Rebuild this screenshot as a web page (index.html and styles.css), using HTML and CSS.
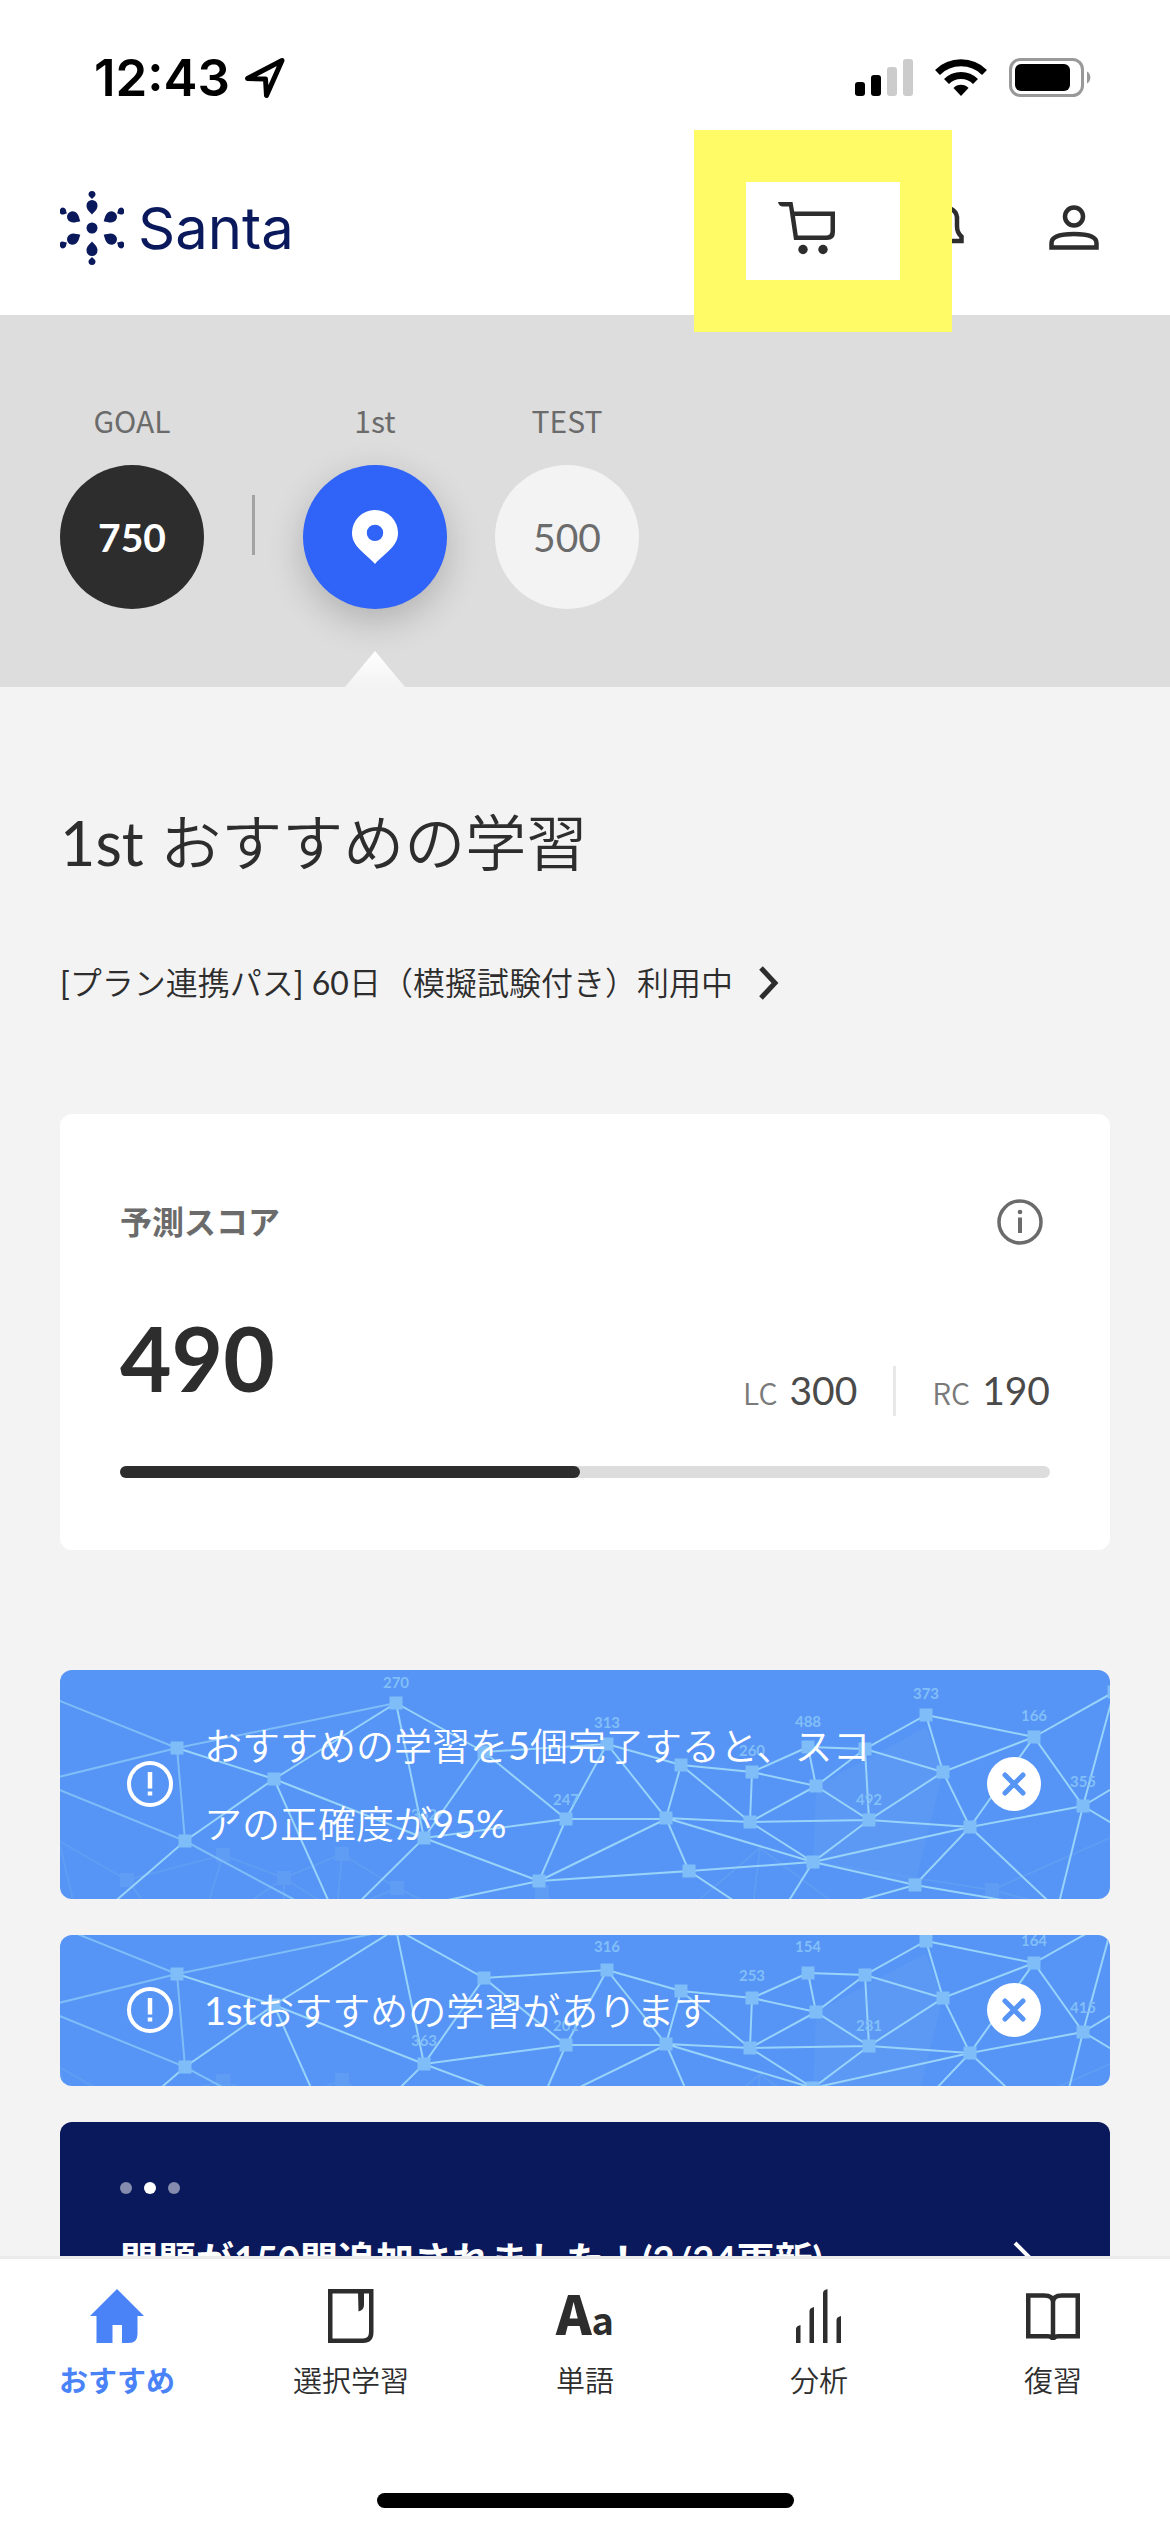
FILE: index.html
```html
<!DOCTYPE html>
<html lang="ja">
<head>
<meta charset="utf-8">
<meta name="viewport" content="width=device-width, initial-scale=1">
<title>Santa</title>
<link rel="stylesheet" href="styles.css">
</head>
<body>
<svg class="defs" aria-hidden="true">
  <defs>
    <path id="petal" d="M0-13.500C-3-17-5.500-18.500-5.500-22.500A5.500 5.500 0 0 1 5.500-22.500C5.500-18.500 3-17 0-13.500Z"/>
    <path id="seed" d="M0-29C-1.500-31-3.500-31.500-3.500-33.500A3.300 3.300 0 0 1 3.500-33.500C3.500-31.500 1.500-31 0-29Z"/>
    <g id="mesh">
      <path class="mesh-face" d="M756 116L866 57L883 102L855 215L753 192Z"/>
      <g class="mesh-faint">
        <path d="M-20 160L67 210L163 185L224 208L282 184L337 218L360 229M67 210L90 240M163 185L140 260M224 208V260M282 184L275 260M224 208L150 260M224 208L290 250M337 218L260 250M0 175L20 260M700 178L640 229M700 178L690 260M700 178L790 245M753 192L932 220L1050 168M932 220L1050 250"/>
        <path d="M61 204h12v12h-12zM157 179h12v12h-12zM218 202h12v12h-12zM276 178h12v12h-12zM331 212h12v12h-12zM476 216h12v12h-12zM926 214h12v12h-12z"/>
      </g>
      <path class="mesh-soft" d="M-30 19L117 78L-30 114M336 33L117 78M-30 108L125 171L117 78M125 171L233 229L280 254"/>
      <path class="mesh-line" d="M117 78L214 109L336 33M214 109L125 171L30 253M214 109L364 168M214 109L277 250M336 33L364 168L277 254M336 33L424 82L547 74L506 149L479 211L364 168L506 149L424 82L364 168M547 74L621 95L606 148L547 74M506 149H606L479 211L629 201L606 148M479 211L340 240M621 95L692 102L690 152L621 95M690 152L606 148L753 192L629 201L700 248M692 102L748 77L756 116L692 102M756 116L690 152L809 150L756 116L805 79L748 77M805 79L809 150L883 102L805 79L866 45L883 102L974 67L866 45M690 152L753 192L809 150L910 157L753 192L855 215L910 157L883 102M753 192L720 245M910 157L974 67L1023 136L910 157L1003 245M974 67L1054 22L1070 12M1023 136L1054 22M1023 136L1060 114M1023 136L1060 158M1023 136L996 245M855 215L780 236M855 215L960 233"/>
      <path class="mesh-node" d="M110.500 71.500h13v13h-13zM207.500 102.500h13v13h-13zM118.500 164.500h13v13h-13zM329.500 26.500h13v13h-13zM417.500 75.500h13v13h-13zM540.500 67.500h13v13h-13zM357.500 161.500h13v13h-13zM499.500 142.500h13v13h-13zM472.500 204.500h13v13h-13zM614.500 88.500h13v13h-13zM599.500 141.500h13v13h-13zM685.500 95.500h13v13h-13zM683.500 145.500h13v13h-13zM622.500 194.500h13v13h-13zM741.500 70.500h13v13h-13zM798.500 72.500h13v13h-13zM749.500 109.500h13v13h-13zM802.500 143.500h13v13h-13zM746.500 185.500h13v13h-13zM859.500 38.500h13v13h-13zM967.500 60.500h13v13h-13zM876.500 95.500h13v13h-13zM903.500 150.500h13v13h-13zM848.500 208.500h13v13h-13zM1016.500 129.500h13v13h-13zM1047.500 15.500h13v13h-13z"/>
    </g>
    <g id="alert">
      <circle cx="24" cy="24" r="21" fill="none" stroke="#fff" stroke-width="4"/>
      <path d="M24 12v16.500M24 31.500v4" fill="none" stroke="#fff" stroke-width="4.500"/>
    </g>
    <g id="close">
      <circle cx="27" cy="27" r="27" fill="#fff"/>
      <path d="M18 18l18 18M36 18L18 36" fill="none" stroke="#5694f5" stroke-width="5" stroke-linecap="round"/>
    </g>
  </defs>
</svg>

<div class="app">
  <div class="status">
    <div class="status-group">
      <span class="clock">12:43</span>
      <svg width="42" height="42" viewBox="0 0 42 42" aria-hidden="true"><path d="M3.500 21.500L38 3.500L22.500 38.500L21.500 22Z" fill="none" stroke="#000" stroke-width="5" stroke-linejoin="round"/></svg>
    </div>
    <div class="status-group status-right">
      <svg width="58" height="38" viewBox="0 0 58 38" aria-hidden="true"><rect y="23" width="10" height="14" rx="3"/><rect x="16" y="16" width="10" height="21" rx="3"/><rect x="32" y="8" width="10" height="29" rx="3" fill="#ccc"/><rect x="48" width="10" height="37" rx="3" fill="#ccc"/></svg>
      <svg width="52" height="38" viewBox="0 0 52 38" aria-hidden="true"><path d="M26 37L18.500 29A10.500 10.500 0 0 1 33.500 29Z"/><path d="M11.500 22.500A20.500 20.500 0 0 1 40.500 22.500M2.500 13.500A33.500 33.500 0 0 1 49.500 13.500" fill="none" stroke="#000" stroke-width="7"/></svg>
      <svg width="83" height="40" viewBox="0 0 83 40" aria-hidden="true"><rect x="1.500" y="1.500" width="72" height="36" rx="10" fill="none" stroke="#999" stroke-width="3"/><rect x="6" y="6" width="55" height="27" rx="6"/><path d="M78 13.500a7 7 0 0 1 0 12z" fill="#999"/></svg>
    </div>
  </div>

  <header class="header">
    <a class="brand" href="#">
      <svg width="64" height="74" viewBox="-32 -37 64 74" fill="#0a195c" aria-hidden="true">
        <circle r="5.500"/>
        <use href="#petal"/><use href="#petal" transform="rotate(60)"/><use href="#petal" transform="rotate(120)"/><use href="#petal" transform="rotate(180)"/><use href="#petal" transform="rotate(240)"/><use href="#petal" transform="rotate(300)"/>
        <use href="#seed"/><use href="#seed" transform="rotate(60)"/><use href="#seed" transform="rotate(120)"/><use href="#seed" transform="rotate(180)"/><use href="#seed" transform="rotate(240)"/><use href="#seed" transform="rotate(300)"/>
      </svg>
      <span>Santa</span>
    </a>
    <nav class="tools" aria-label="メニュー">
      <button class="tool tool-cart" type="button" aria-label="カート">
        <svg width="54" height="54" viewBox="2 0 54 54" aria-hidden="true"><path d="M1 1H15.500L17.200 10.500H58V31Q58 39 50 39H17L12 5.500H6Q2 5.500 1 1ZM18 15L20.800 34.500H49Q53.500 34.500 53.500 30V15Z" fill="#2d2d2d" fill-rule="evenodd"/><circle cx="26" cy="48.500" r="4.700" fill="#2d2d2d"/><circle cx="46" cy="48.500" r="4.700" fill="#2d2d2d"/></svg>
      </button>
      <button class="tool" type="button" aria-label="お知らせ">
        <svg width="54" height="54" viewBox="0 0 54 54" fill="none" stroke="#2d2d2d" stroke-width="4.500" aria-hidden="true"><path d="M4.500 40V35.500Q9 32 9 25V19Q9 6 27 6T44 19V25Q44 32 48.500 35.500V40ZM20 46q7 5 14 0"/></svg>
      </button>
      <button class="tool" type="button" aria-label="プロフィール">
        <svg width="54" height="54" viewBox="0 0 54 54" fill="none" stroke="#2d2d2d" stroke-width="4.500" aria-hidden="true"><circle cx="27" cy="15.500" r="9"/><path d="M4.500 46.500V42Q4.500 33 27 33T49.500 42V46.500Z"/></svg>
      </button>
    </nav>
  </header>

  <main class="main">
    <section class="steps" aria-label="ステップ">
      <div class="step"><span class="step-label">GOAL</span><span class="step-disc step-goal">750</span></div>
      <div class="step-rule"></div>
      <div class="step step-current"><span class="step-label">1st</span>
        <button class="step-disc step-active" type="button" aria-label="1st"><svg width="46" height="54" viewBox="0 0 46 54" aria-hidden="true"><path d="M23 0A22.800 22.800 0 0 1 46 23C46 37 32 43.500 23 54C14 43.500 0 37 0 23A22.800 22.800 0 0 1 23 0ZM23 14.700A8.200 8.200 0 1 0 23 31.100A8.200 8.200 0 1 0 23 14.700Z" fill="#fff" fill-rule="evenodd"/></svg></button>
      </div>
      <div class="step"><span class="step-label">TEST</span><button class="step-disc step-test" type="button">500</button></div>
    </section>

    <div class="content">
      <h1 class="title"><span class="latin">1st</span> おすすめの学習</h1>
      <a class="plan" href="#"><span><span class="latin">[</span>プラン連携パス<span class="latin">] 60</span>日（模擬試験付き）利用中</span>
        <svg width="20" height="34" viewBox="0 0 20 34" aria-hidden="true"><path d="M2 2L16 17L2 32" fill="none" stroke="#2d2d2d" stroke-width="5"/></svg>
      </a>

      <section class="card">
        <div class="card-head">
          <h2 class="card-title">予測スコア</h2>
          <button class="info" type="button" aria-label="詳細"><svg width="46" height="46" viewBox="0 0 46 46" aria-hidden="true"><circle cx="23" cy="23" r="21" fill="none" stroke="#6b6b6b" stroke-width="3.500"/><path d="M23 18.500V34" stroke="#6b6b6b" stroke-width="4"/><circle cx="23" cy="13" r="2.300" fill="#6b6b6b"/></svg></button>
        </div>
        <div class="score-row">
          <strong class="score">490</strong>
          <dl class="parts">
            <div class="part"><dt>LC</dt><dd>300</dd></div>
            <div class="part"><dt>RC</dt><dd>190</dd></div>
          </dl>
        </div>
        <div class="bar"><div class="bar-fill" style="width:49.500%"></div></div>
      </section>

      <div class="notices">
        <div class="notice">
          <svg class="mesh" viewBox="0 0 1050 229" preserveAspectRatio="xMidYMid slice" aria-hidden="true"><use href="#mesh"/><g class="mesh-text"><text x="336" y="18">270</text><text x="547" y="58">313</text><text x="506" y="135">247</text><text x="364" y="150">362</text><text x="748" y="57">488</text><text x="692" y="86">260</text><text x="809" y="135">492</text><text x="866" y="29">373</text><text x="974" y="51">166</text><text x="1023" y="117">355</text></g></svg>
          <svg class="notice-icon" viewBox="0 0 48 48" aria-hidden="true"><use href="#alert"/></svg>
          <p class="notice-text">おすすめの学習を<span class="latin">5</span>個完了すると、スコアの正確度が<span class="latin">95%</span></p>
          <button class="close" type="button" aria-label="閉じる"><svg width="54" height="54" viewBox="0 0 54 54" aria-hidden="true"><use href="#close"/></svg></button>
        </div>
        <div class="notice">
          <svg class="mesh" viewBox="0 0 1050 229" preserveAspectRatio="xMidYMid slice" aria-hidden="true"><use href="#mesh"/><g class="mesh-text"><text x="547" y="56">316</text><text x="506" y="135">201</text><text x="364" y="150">363</text><text x="748" y="56">154</text><text x="692" y="85">253</text><text x="809" y="135">281</text><text x="974" y="50">164</text><text x="1023" y="117">415</text></g></svg>
          <svg class="notice-icon" viewBox="0 0 48 48" aria-hidden="true"><use href="#alert"/></svg>
          <p class="notice-text"><span class="latin">1st</span>おすすめの学習があります</p>
          <button class="close" type="button" aria-label="閉じる"><svg width="54" height="54" viewBox="0 0 54 54" aria-hidden="true"><use href="#close"/></svg></button>
        </div>
        <a class="promo" href="#">
          <span class="dots"><i></i><i class="on"></i><i></i></span>
          <span class="promo-row"><span>問題が150問追加されました！(2/24更新)</span>
          <svg width="22" height="36" viewBox="0 0 22 36" aria-hidden="true"><path d="M2 2L18 18L2 34" fill="none" stroke="#fff" stroke-width="4"/></svg></span>
        </a>
      </div>
    </div>
  </main>

  <footer class="footer">
    <nav class="tabs" aria-label="タブ">
      <a class="tab tab-on" href="#"><svg viewBox="0 0 54 54" aria-hidden="true"><path d="M27 0L54 27H47.500V45Q47.500 54 38.500 54H32V36H22.500V54H6.500V27H0Z" fill="#4a83f7"/></svg>おすすめ</a>
      <a class="tab" href="#"><svg viewBox="0 0 54 54" fill="none" stroke="#2d2d2d" stroke-width="4.500" aria-hidden="true"><path d="M6.250 2.250H47.250V43Q47.250 51.750 39 51.750H6.250Z"/><path d="M34 3H40V16Q40 21 34.500 22.500Z" fill="#2d2d2d" stroke="none"/></svg>選択学習</a>
      <a class="tab" href="#"><span class="letters"><b>A</b>a</span>単語</a>
      <a class="tab" href="#"><svg viewBox="0 0 54 54" fill="#2d2d2d" aria-hidden="true"><path d="M4 54V40Q4 37 8.500 36V54ZM17.500 54V22Q17.500 19 22 18V54ZM31 54V4Q31 1 35.500 0V54ZM44.500 54V31Q44.500 28 49 27V54Z"/></svg>分析</a>
      <a class="tab" href="#"><svg viewBox="0 0 54 54" fill="none" stroke="#2d2d2d" stroke-width="4.500" aria-hidden="true"><path d="M27 13Q27 6.500 18 6.500H2.250V47.250H22Q27 47.250 27 51Q27 47.250 32 47.250H51.750V6.500H36Q27 6.500 27 13V50"/></svg>復習</a>
    </nav>
    <div class="home-bar"></div>
  </footer>
</div>
</body>
</html>
```
FILE: styles.css
```css
*,
*::after {
  box-sizing: border-box;
  margin: 0;
  padding: 0;
}

body {
  font-family: Lato, "Noto Sans CJK JP", sans-serif;
  color: #2d2d2d;
  background: #f3f3f3;
}

svg {
  display: block;
  flex: none;
}

a {
  color: inherit;
  text-decoration: none;
}

button {
  font: inherit;
  color: inherit;
  background: none;
  border: 0;
}

.defs {
  position: absolute;
  width: 0;
  height: 0;
}

/* latin runs sit a step heavier than the light Japanese text */
.latin {
  font-weight: 400;
}

.app {
  display: flex;
  flex-direction: column;
  height: 100vh;
}

/* status bar */
.status {
  display: flex;
  justify-content: space-between;
  align-items: center;
  padding: 48px 78px 0 94px;
  background: #fff;
}

.status-group {
  display: flex;
  align-items: center;
  gap: 14px;
  height: 60px;
}

.status-right {
  gap: 22px;
}

.clock {
  font-family: Inter, sans-serif;
  font-size: 51px;
  font-weight: 600;
  line-height: 60px;
  color: #000;
}

/* header */
.header {
  display: flex;
  justify-content: space-between;
  align-items: center;
  height: 207px;
  padding: 33px 69px 0 60px;
  background: #fff;
}

.brand {
  display: flex;
  align-items: center;
  gap: 14px;
  font-family: Inter, sans-serif;
  font-size: 58px;
  line-height: 72px;
  color: #0a195c;
}

.tools {
  display: flex;
  align-items: center;
  gap: 80px;
}

.tool {
  position: relative;
}

.tool svg {
  overflow: visible;
}

.tool-cart::after {
  content: "";
  position: absolute;
  z-index: 2;
  top: -71px;
  left: -85px;
  width: 258px;
  height: 202px;
  border: 52px solid #fffb66;
}

/* scrolling area */
.main {
  flex: 1;
  min-height: 0;
  overflow-y: auto;
  scrollbar-width: none;
}

.steps {
  display: flex;
  gap: 48px;
  height: 372px;
  padding: 84px 60px 0;
  background: #ddd;
}

.step {
  position: relative;
  display: flex;
  flex-direction: column;
  align-items: center;
  gap: 24px;
}

.step-label {
  font-family: "Noto Sans CJK JP", sans-serif;
  font-size: 30px;
  line-height: 42px;
  color: #6b6b6b;
}

.step-disc {
  display: flex;
  align-items: center;
  justify-content: center;
  width: 144px;
  height: 144px;
  border-radius: 50%;
  font-size: 39px;
}

.step-goal {
  background: #2d2d2d;
  color: #fff;
  font-weight: 700;
}

.step-active {
  background: #3063f7;
  box-shadow: 0 12px 36px rgba(0, 0, 0, 0.2);
}

.step-test {
  background: #f3f3f3;
  color: #6b6b6b;
}

.step-rule {
  width: 3px;
  height: 60px;
  margin-top: 96px;
  background: #a3a3a3;
}

.step-current::after {
  content: "";
  position: absolute;
  bottom: 0;
  width: 60px;
  height: 36px;
  background: linear-gradient(#fff, #f3f3f3);
  clip-path: polygon(50% 0, 100% 100%, 0 100%);
}

.content {
  padding: 108px 60px 0;
}

.title {
  font-size: 61px;
  font-weight: 350;
  line-height: 96px;
}

.plan {
  display: flex;
  align-items: center;
  gap: 26px;
  margin-top: 68px;
  font-size: 32px;
  font-weight: 350;
  line-height: 48px;
}

/* predicted score */
.card {
  margin-top: 107px;
  padding: 78px 60px 72px;
  border-radius: 12px;
  background: #fff;
}

.card-head {
  display: flex;
  justify-content: space-between;
  align-items: center;
  padding-right: 7px;
}

.card-title {
  font-size: 32px;
  line-height: 60px;
  color: #6b6b6b;
}

.score-row {
  display: flex;
  justify-content: space-between;
  align-items: flex-end;
  height: 164px;
}

.score {
  font-size: 89px;
  line-height: 116px;
}

.parts {
  display: flex;
}

.part {
  display: flex;
  align-items: baseline;
  gap: 12px;
  line-height: 48px;
}

.part + .part {
  margin-left: 36px;
  padding-left: 36px;
  border-left: 3px solid #e8e8e8;
}

.part dt {
  font-family: "Noto Sans CJK JP", sans-serif;
  font-size: 30px;
  font-weight: 350;
  color: #7a7a7a;
}

.part dd {
  font-size: 39px;
  color: #4a4a4a;
}

.bar {
  height: 12px;
  margin-top: 50px;
  border-radius: 6px;
  background: #ddd;
}

.bar-fill {
  height: 100%;
  border-radius: 6px;
  background: #2d2d2d;
}

/* notices */
.notices {
  display: flex;
  flex-direction: column;
  gap: 36px;
  margin-top: 120px;
}

.notice {
  position: relative;
  display: flex;
  align-items: center;
  padding: 36px 69px 37px 66px;
  border-radius: 12px;
  background: #5694f5;
  color: #fff;
  overflow: hidden;
}

.mesh {
  position: absolute;
  top: 0;
  left: 0;
  width: 100%;
  height: 100%;
}

.mesh-face {
  fill: #5f9df5;
  opacity: 0.5;
}

.mesh-faint {
  fill: #5f9df4;
  stroke: #5f9df4;
  stroke-width: 2;
}

.mesh-faint path:first-child,
.mesh-soft,
.mesh-line {
  fill: none;
}

.mesh-soft {
  stroke: #7fbdf8;
  stroke-width: 2;
}

.mesh-line {
  stroke: #98d3fa;
  stroke-width: 2;
}

.mesh-node {
  fill: #7ebdf8;
}

.mesh-text {
  font-family: Lato, sans-serif;
  font-size: 15px;
  font-weight: 700;
  text-anchor: middle;
  fill: #82bff8;
}

.notice-icon,
.notice-text,
.close {
  position: relative;
}

.notice-icon {
  width: 48px;
  height: 48px;
}

.notice-text {
  flex: 1;
  margin: 0 94px 0 30px;
  font-size: 38px;
  font-weight: 350;
  line-height: 78px;
  word-break: break-all;
}

.promo {
  display: block;
  padding: 60px 75px 60px 60px;
  border-radius: 12px;
  background: #0a195c;
  color: #fff;
}

.dots {
  display: flex;
  gap: 12px;
}

.dots i {
  width: 12px;
  height: 12px;
  border-radius: 50%;
  background: #858cad;
}

.dots .on {
  background: #fff;
}

.promo-row {
  display: flex;
  justify-content: space-between;
  align-items: center;
  margin-top: 32px;
  font-size: 38px;
  font-weight: 700;
  line-height: 66px;
}

/* tab bar */
.footer {
  position: relative;
  border-top: 3px solid #ebebeb;
  background: #fff;
}

.tabs {
  display: grid;
  grid-template-columns: repeat(5, 1fr);
}

.tab {
  display: flex;
  flex-direction: column;
  align-items: center;
  gap: 12px;
  padding-top: 30px;
  font-family: "Noto Sans CJK JP", sans-serif;
  font-size: 29px;
  font-weight: 350;
  line-height: 48px;
}

.tab svg,
.letters {
  height: 54px;
}

.tab svg {
  width: 54px;
}

.tab-on {
  color: #4a83f7;
  font-weight: 700;
}

.letters {
  font-size: 38px;
  font-weight: 700;
  line-height: 46px;
}

.letters b {
  font-size: 54px;
}

.home-bar {
  width: 417px;
  height: 15px;
  margin: 90px auto 24px;
  border-radius: 8px;
  background: #000;
}
```
